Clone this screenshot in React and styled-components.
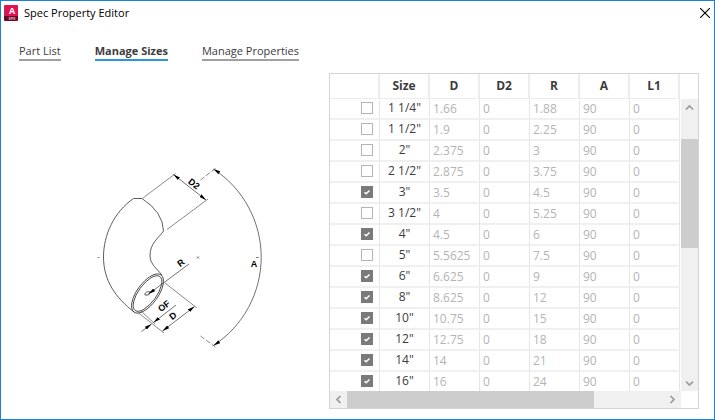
import styled, { createGlobalStyle, css } from "styled-components";
import { useState } from "react";

const tabs = ["Part List", "Manage Sizes", "Manage Properties"];
const columns = ["Size", "D", "D2", "R", "A", "L1"];

const sizes = [
  { size: '1 1/4"', d: "1.66", r: "1.88", used: false },
  { size: '1 1/2"', d: "1.9", r: "2.25", used: false },
  { size: '2"', d: "2.375", r: "3", used: false },
  { size: '2 1/2"', d: "2.875", r: "3.75", used: false },
  { size: '3"', d: "3.5", r: "4.5", used: true },
  { size: '3 1/2"', d: "4", r: "5.25", used: false },
  { size: '4"', d: "4.5", r: "6", used: true },
  { size: '5"', d: "5.5625", r: "7.5", used: false },
  { size: '6"', d: "6.625", r: "9", used: true },
  { size: '8"', d: "8.625", r: "12", used: true },
  { size: '10"', d: "10.75", r: "15", used: true },
  { size: '12"', d: "12.75", r: "18", used: true },
  { size: '14"', d: "14", r: "21", used: true },
  { size: '16"', d: "16", r: "24", used: true },
];

const Logo = () => (
  <svg width="14" height="16" viewBox="0 0 14 16" aria-hidden="true">
    <path d="M1 0h12a1 1 0 0 1 1 1v10H0V1a1 1 0 0 1 1-1z" fill="#e51050" />
    <path d="M0 1l1.500 1v9H0z" fill="#b0305a" />
    <path d="M0 11h14v4a1 1 0 0 1-1 1H1a1 1 0 0 1-1-1z" fill="#6e0a28" />
    <text x="8" y="9" textAnchor="middle" fontSize="9" fontWeight="700" fill="#fff">
      A
    </text>
    <text x="8" y="15" textAnchor="middle" fontSize="4" fontWeight="700" fill="#e3b3c0">
      SPE
    </text>
  </svg>
);

const Chevron = ({ d }) => (
  <svg width="9" height="9" viewBox="0 0 9 9" aria-hidden="true">
    <path d={d} fill="none" stroke="#999" strokeWidth="1.700" />
  </svg>
);

const ElbowDrawing = () => (
  <Drawing viewBox="96 160 172 192" role="img" aria-label="Elbow dimensions">
    <defs>
      <marker id="arrow" viewBox="0 0 7 4" refX="7" refY="2" markerWidth="7" markerHeight="4" markerUnits="userSpaceOnUse" orient="auto-start-reverse">
        <path d="M0 0.300L7 2L0 3.700z" fill="#000" />
      </marker>
    </defs>
    {/* pipe body */}
    <g fill="none" stroke="#333" strokeWidth="0.8">
      <path d="M142 198.500H133.500C114 212 103.500 235 103.500 257C103.500 281 116 298 134 312" />
      <path d="M142 198.500Q163 212 163.500 231C158 239 150 243 150 256C150 264 158 270 162 275" />
      <ellipse cx="147.500" cy="293.500" rx="23" ry="10.500" transform="rotate(-54 147.500 293.500)" />
      <ellipse cx="147.500" cy="293.500" rx="21" ry="9" transform="rotate(-54 147.500 293.500)" />
      <path d="M150 292C147 291 144.500 293 145 295H148.500L151 291" />
    </g>
    {/* extension lines */}
    <g fill="none" stroke="#555" strokeWidth="0.7">
      <path d="M143 198L175.500 173.500M167 229.500L208 199" />
      <path d="M200.500 180L216 168" strokeDasharray="5 2" />
      <path d="M200.500 336L215.500 347" strokeDasharray="5 2" />
      <path d="M165 283L197 308M138 312.500L164 333M141 311L155 324" />
      <path d="M97.500 257.500h2M256 257.500h3M197 256.500l2 2M199 256.500l-2 2" />
    </g>
    {/* dimension lines */}
    <g fill="none" stroke="#333" strokeWidth="0.7">
      <path d="M173.500 174.500L206 200" markerStart="url(#arrow)" markerEnd="url(#arrow)" />
      <path d="M213.500 169A105.500 105.500 0 0 1 213.500 345.500" markerStart="url(#arrow)" markerEnd="url(#arrow)" />
      <path d="M189 264L148.500 294" markerEnd="url(#arrow)" />
      <path d="M162.500 331L194.500 306.500" markerStart="url(#arrow)" markerEnd="url(#arrow)" />
      <path d="M176 305L153.500 322.500" markerEnd="url(#arrow)" />
      <path d="M141.500 331.500L151.500 324" markerEnd="url(#arrow)" />
    </g>
    <Label transform="translate(194 184) rotate(38)">D2</Label>
    <Label transform="translate(181 263) rotate(-38)">R</Label>
    <Label transform="translate(164 306) rotate(-38)">OF</Label>
    <Label transform="translate(173 316) rotate(-38)">D</Label>
    <Label transform="translate(254 264)">A</Label>
  </Drawing>
);

const App = () => {
  const [activeTab, setActiveTab] = useState("Manage Sizes");
  const [rows, setRows] = useState(sizes);

  const toggle = (index) => {
    setRows(rows.map((row, i) => (i === index ? { ...row, used: !row.used } : row)));
  };

  return (
    <Window>
      <GlobalStyle />
      <TitleBar>
        <Logo />
        <Title>Spec Property Editor</Title>
        <CloseButton aria-label="Close">
          <svg width="10" height="10" viewBox="0 0 10 10" aria-hidden="true">
            <path d="M0 0l10 10M10 0l-10 10" stroke="#000" strokeWidth="1.100" />
          </svg>
        </CloseButton>
      </TitleBar>
      <Tabs>
        {tabs.map((tab) => (
          <Tab key={tab} $active={tab === activeTab} onClick={() => setActiveTab(tab)}>
            {tab}
          </Tab>
        ))}
      </Tabs>
      <Content>
        <Preview>
          <ElbowDrawing />
        </Preview>
        <Frame>
          <Viewport>
            <Table>
              <thead>
                <tr>
                  <HeadCell aria-label="Use" />
                  {columns.map((name) => (
                    <HeadCell key={name}>{name}</HeadCell>
                  ))}
                </tr>
              </thead>
              <tbody>
                {rows.map(({ size, d, r, used }, index) => (
                  <tr key={size}>
                    <Cell $check>
                      <CheckBox type="checkbox" aria-label={size} checked={used} onChange={() => toggle(index)} />
                    </Cell>
                    <Cell $name>{size}</Cell>
                    <Cell>{d}</Cell>
                    <Cell>0</Cell>
                    <Cell>{r}</Cell>
                    <Cell>90</Cell>
                    <Cell>0</Cell>
                  </tr>
                ))}
              </tbody>
            </Table>
          </Viewport>
          <VerticalBar>
            <ScrollButton aria-label="Scroll up">
              <Chevron d="M1 6.500L4.500 3L8 6.500" />
            </ScrollButton>
            <Space $grow={23} />
            <Thumb $grow={110} />
            <Space $grow={126} />
            <ScrollButton aria-label="Scroll down">
              <Chevron d="M1 3.500L4.500 7L8 3.500" />
            </ScrollButton>
          </VerticalBar>
          <HorizontalBar>
            <ScrollButton aria-label="Scroll left">
              <Chevron d="M6.500 1L3 4.500L6.500 8" />
            </ScrollButton>
            <Thumb $grow={247} />
            <Space $grow={70} />
            <ScrollButton aria-label="Scroll right">
              <Chevron d="M2.500 1L6 4.500L2.500 8" />
            </ScrollButton>
          </HorizontalBar>
        </Frame>
      </Content>
    </Window>
  );
};

const GlobalStyle = createGlobalStyle`
  * {
    box-sizing: border-box;
  }
  body {
    margin: 0;
    background: #fff;
    font-family: "Open Sans", "Noto Sans", sans-serif;
    font-size: 12px;
    line-height: 16px;
    color: #3c3c3c;
  }
  button {
    padding: 0;
    border: 0;
    background: none;
    font: inherit;
    color: inherit;
    cursor: pointer;
  }
`;

const Window = styled.div`
  display: flex;
  flex-direction: column;
  height: 100vh;
  border: 1px solid #1883d7;
  background: #fff;
`;
const TitleBar = styled.header`
  display: flex;
  align-items: center;
  height: 24px;
  padding: 0 4px 0 3px;
`;
const Title = styled.h1`
  flex: 1;
  margin: 0 0 0 6px;
  font-size: 11px;
  font-weight: 400;
  color: #000;
`;
const CloseButton = styled.button`
  display: flex;
`;
const Tabs = styled.nav`
  display: flex;
  gap: 34px;
  padding: 17px 18px 0;
  font-size: 11px;
`;
const Tab = styled.button`
  height: 19px;
  border-bottom: 2px solid #a0a0a0;
  line-height: 16px;

  ${({ $active }) =>
    $active &&
    css`
      border-color: #2a98d6;
      font-weight: 700;
    `}
`;
const Content = styled.main`
  display: grid;
  grid-template-columns: minmax(0, 1fr) 370px;
  flex: 1;
  min-height: 0;
  padding: 12px 15px 10px 0;
`;
const Preview = styled.section`
  display: flex;
  align-items: center;
  justify-content: center;
  padding: 30px 0 0 34px;
`;
const Drawing = styled.svg`
  width: 172px;
  height: 192px;
`;
const Label = styled.text`
  font-family: "Liberation Sans", sans-serif;
  font-size: 9px;
  font-weight: 700;
  fill: #000;
  text-anchor: middle;
  dominant-baseline: central;
`;
const Frame = styled.section`
  display: grid;
  grid-template-columns: minmax(0, 1fr) 17px;
  grid-template-rows: minmax(0, 1fr) 17px;
  border: 1px solid #d4d4d4;
  min-height: 0;
`;
const Viewport = styled.div`
  overflow: hidden;
`;
const Table = styled.table`
  width: 350px;
  table-layout: fixed;
  border-collapse: separate;
  border-spacing: 0;
`;
const HeadCell = styled.th`
  height: 25px;
  padding: 0;
  border-right: 2px solid #ececec;
  border-bottom: 1px solid #ececec;
  text-align: center;
`;
const Cell = styled.td`
  height: 21px;
  padding: 0 3px;
  border-right: 1px solid #e6e6e6;
  border-bottom: 2px solid #f0f0f0;
  color: #b4b4b4;

  ${({ $name }) =>
    $name &&
    css`
      padding-bottom: 2px;
      color: #3c3c3c;
      text-align: center;
    `}
  ${({ $check }) =>
    $check &&
    css`
      padding: 0 6px 1px;
    `}
`;
const CheckBox = styled.input`
  appearance: none;
  display: block;
  width: 12px;
  height: 12px;
  margin: 0 0 0 auto;
  border: 1px solid #b4b4b4;
  background: #fff;

  &:checked {
    border-color: #7a7a7a;
    background: #7a7a7a
      url("data:image/svg+xml;charset=utf-8,%3Csvg xmlns='http://www.w3.org/2000/svg' viewBox='0 0 10 10'%3E%3Cpath d='M2.500 5.200L4.200 6.800L7.500 3.400' fill='none' stroke='%23fff' stroke-width='1.500'/%3E%3C/svg%3E");
  }
`;
const VerticalBar = styled.div`
  display: flex;
  flex-direction: column;
  margin-top: 25px;
  background: #f0f0f0;
`;
const HorizontalBar = styled.div`
  display: flex;
  background: #f0f0f0;
`;
const ScrollButton = styled.button`
  display: flex;
  align-items: center;
  justify-content: center;
  flex: none;
  width: 17px;
  height: 17px;
`;
const Space = styled.div`
  flex: ${({ $grow }) => $grow};
`;
const Thumb = styled(Space)`
  background: #cdcdcd;
`;

export default App;
